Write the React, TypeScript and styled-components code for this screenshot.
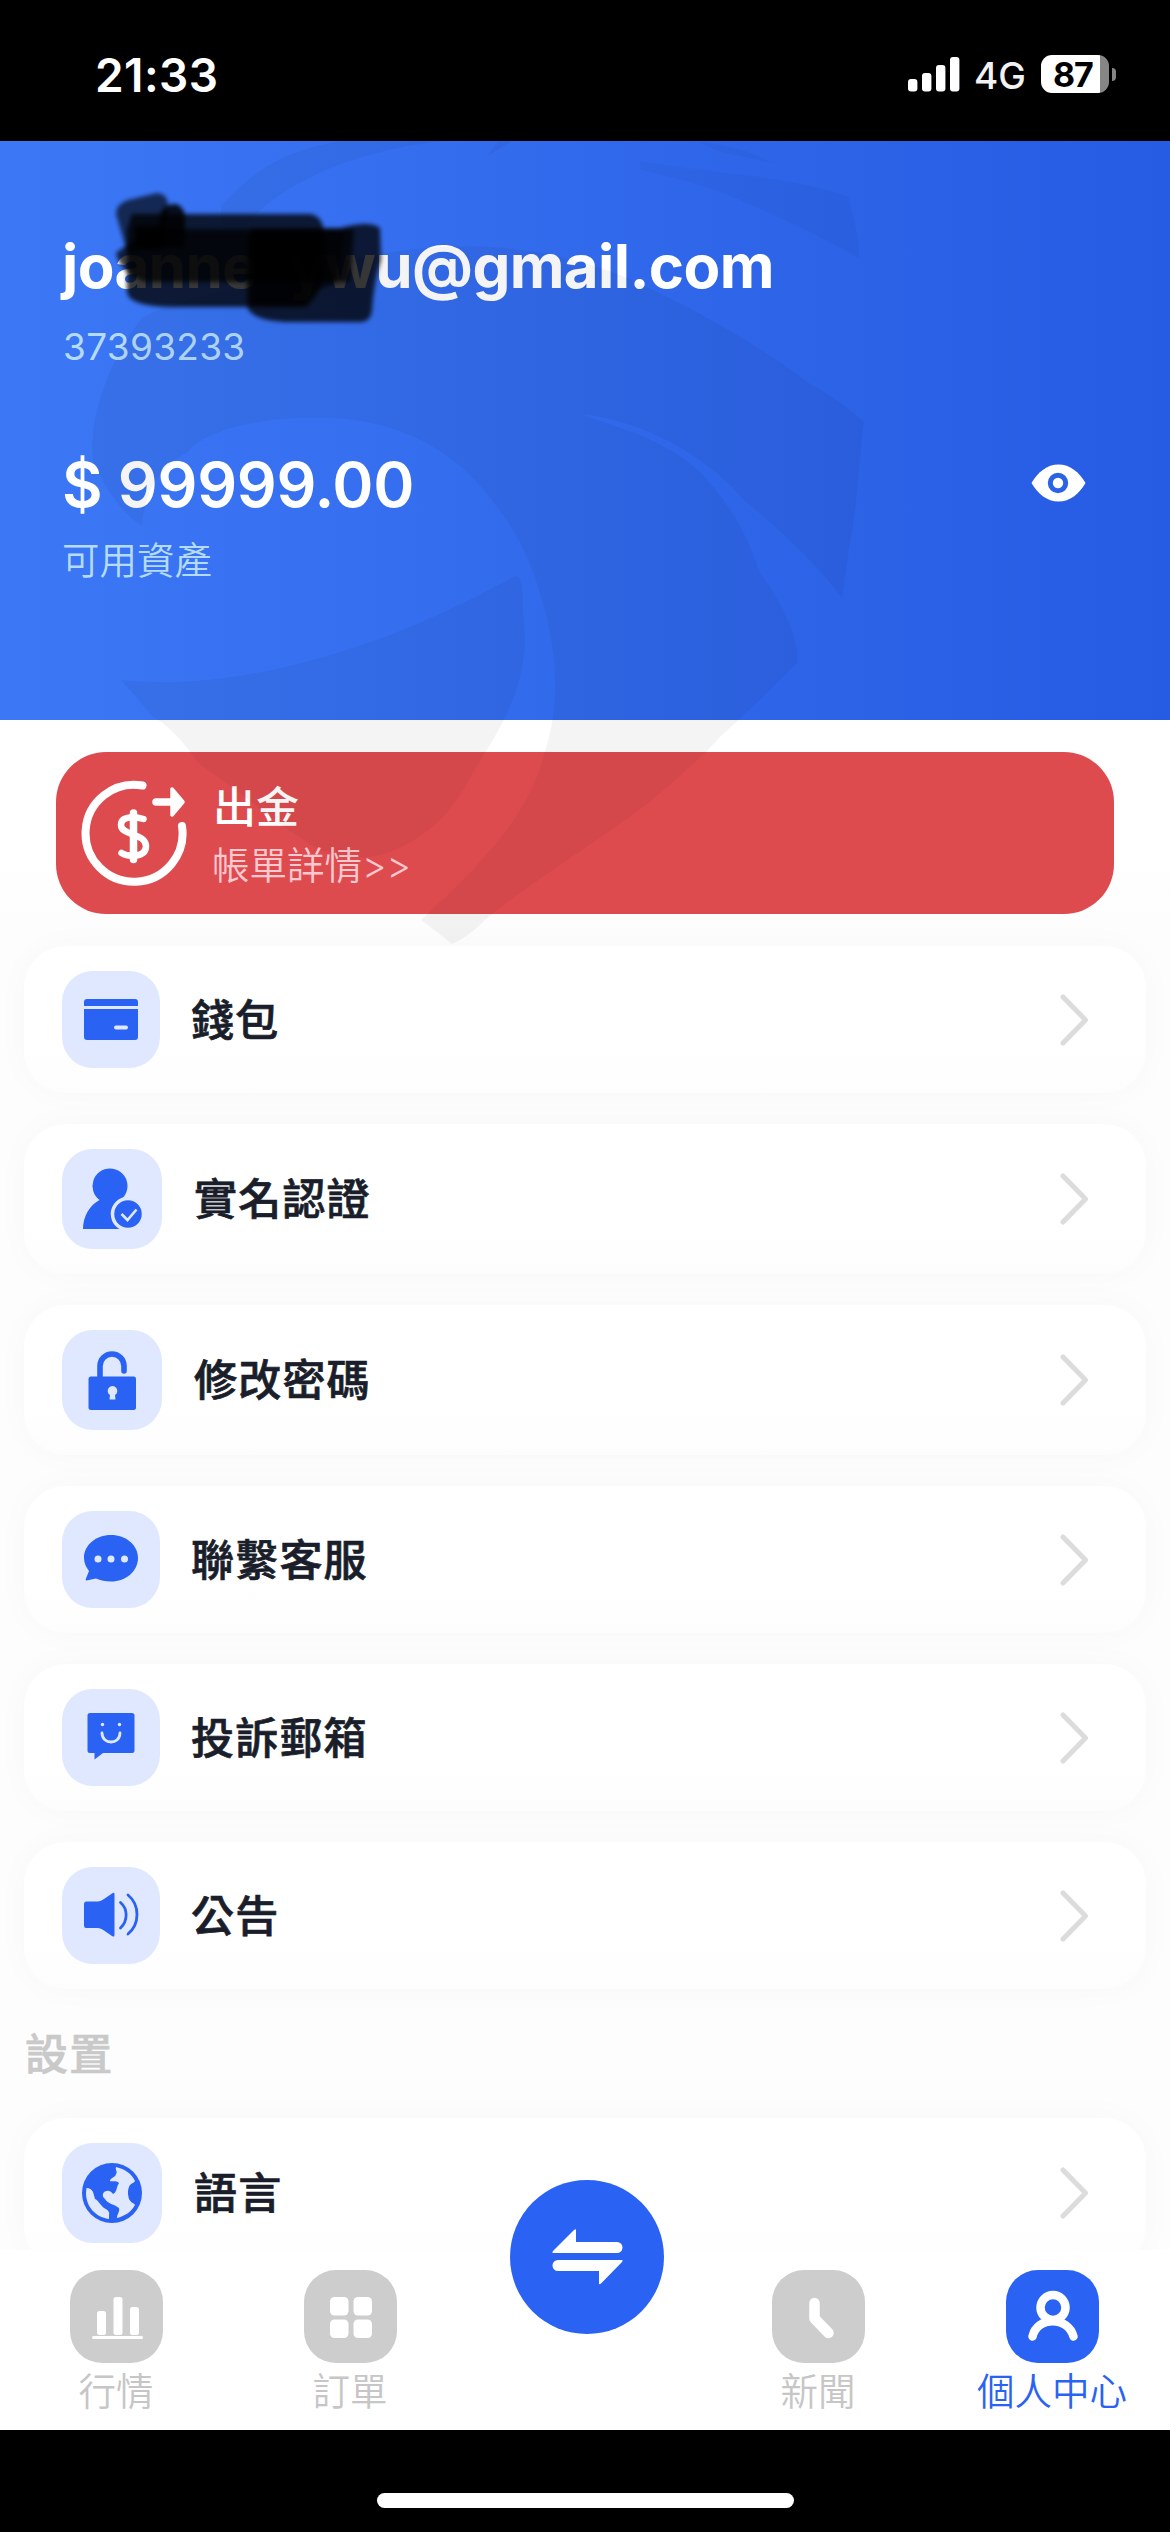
import React from "react";
import styled, { createGlobalStyle } from "styled-components";

const BLUE = "#2a63f3";
const TILE = "#dfe8fe";

const GlobalStyle = createGlobalStyle`
  * { box-sizing: border-box; }
  body { margin: 0; background: #000; }
`;

const Screen = styled.main`
  position: relative;
  width: 1170px;
  height: 2532px;
  display: flex;
  flex-direction: column;
  overflow: hidden;
  background: #fff;
  font-family: Inter, "Noto Sans CJK TC", sans-serif;
`;

const StatusBar = styled.header`
  height: 141px;
  flex: none;
  background: #000;
  color: #fff;
  display: flex;
  justify-content: space-between;
  padding: 52px 54px 0 95px;
`;

const Clock = styled.span`
  font-size: 46px;
  line-height: 46px;
  font-weight: 600;
  letter-spacing: 0.4px;
`;

const StatusIcons = styled.div`
  display: flex;
  align-items: flex-start;
  height: 44px;
`;

const Network = styled.span`
  font-size: 37px;
  line-height: 44px;
  font-weight: 500;
  margin: 2px 15px 0 14px;
  color: #f2f2f2;
`;

const Battery = styled.span`
  width: 68px;
  height: 38px;
  margin-top: 3px;
  border-radius: 11px;
  background: linear-gradient(90deg, #fff 0 59px, #868686 59px);
  color: #000;
  font-size: 34px;
  line-height: 39px;
  font-weight: 700;
  padding-left: 12px;
  letter-spacing: -1.2px;
`;

const Nub = styled.span`
  width: 4px;
  height: 13px;
  margin: 16px 0 0 3px;
  border-radius: 0 6px 6px 0;
  background: #868686;
`;

const Profile = styled.section`
  height: 579px;
  flex: none;
  padding: 89px 84px 0 62px;
  background: linear-gradient(90deg, #3c78f6 0%, #346cee 40%, #2b62e6 75%, #265be4 100%);
  color: #fff;
`;

const Email = styled.h1`
  margin: 0;
  font-size: 60px;
  line-height: 72px;
  font-weight: 700;
  letter-spacing: -0.6px;
  white-space: nowrap;
`;

const Hidden = styled.span`
  display: inline-block;
  width: 32px;
`;

const AccountId = styled.p`
  margin: 23px 0 0 1px;
  font-size: 37px;
  line-height: 44px;
  font-weight: 400;
  letter-spacing: 0.3px;
  color: #b4dcfa;
`;

const BalanceRow = styled.div`
  margin-top: 76px;
  height: 76px;
  display: flex;
  justify-content: space-between;
  align-items: center;
`;

const Balance = styled.strong`
  font-size: 62.5px;
  line-height: 76px;
  font-weight: 600;
  letter-spacing: -0.3px;
  margin-top: 2px;
`;

const BalanceLabel = styled.p`
  margin: 16px 0 0;
  font-size: 37.5px;
  line-height: 48px;
  font-weight: 350;
  color: #b4dcfa;
`;

const Content = styled.section`
  height: 1530px;
  flex: none;
  overflow: hidden;
  display: flex;
  flex-direction: column;
  background: linear-gradient(#fff 0, #fff 120px, #fdfdfd 200px);
`;

const Withdraw = styled.div`
  height: 162px;
  flex: none;
  margin: 32px 56px 32px;
  padding: 27px 25px 25px;
  border-radius: 50px;
  background: #de4b4f;
  display: flex;
  gap: 25px;
`;

const WithdrawText = styled.div`
  display: flex;
  flex-direction: column;
  color: #fff;
`;

const WithdrawTitle = styled.span`
  font-size: 43px;
  line-height: 56px;
  font-weight: 500;
  padding-left: 1px;
`;

const WithdrawLink = styled.span`
  margin-top: 7px;
  font-size: 37.5px;
  line-height: 48px;
  font-weight: 350;
  color: #ffc9d0;
`;

const Menu = styled.div`
  display: flex;
  flex-direction: column;
  gap: 31px;
  padding: 0 24px;
`;

const Row = styled.div<{ $tall?: boolean }>`
  height: ${(p) => (p.$tall ? 150 : 147)}px;
  flex: none;
  display: flex;
  align-items: center;
  padding: 0 57px 0 38px;
  border-radius: 42px;
  background: linear-gradient(#fff 60%, #fdfdfd);
  box-shadow: 0 0 34px rgba(0, 0, 0, 0.026);
`;

const Tile = styled.span<{ $tall?: boolean }>`
  width: ${(p) => (p.$tall ? 100 : 98)}px;
  height: ${(p) => (p.$tall ? 100 : 97)}px;
  border-radius: 31px;
  background: ${TILE};
  display: grid;
  place-items: center;
`;

const RowLabel = styled.span<{ $tall?: boolean }>`
  flex: 1;
  margin-left: ${(p) => (p.$tall ? 32 : 31)}px;
  font-size: 43px;
  line-height: 60px;
  font-weight: 500;
  letter-spacing: 1.2px;
  color: #1a1e2a;
  -webkit-text-stroke: 0.7px #1a1e2a;
`;

const SectionTitle = styled.h2`
  margin: 35px 0 34px 25px;
  font-size: 43px;
  line-height: 60px;
  font-weight: 500;
  letter-spacing: 1.2px;
  color: #c9c9c9;
  -webkit-text-stroke: 0.7px #c9c9c9;
`;

const TabBar = styled.nav`
  height: 180px;
  flex: none;
  background: #fff;
  display: grid;
  grid-template-columns: repeat(5, 234px);
  margin-left: -1px;
`;

const Tab = styled.div<{ $active?: boolean }>`
  display: flex;
  flex-direction: column;
  align-items: center;
  padding-top: 20px;
  font-size: 37.5px;
  line-height: 50px;
  font-weight: 350;
  color: ${(p) => (p.$active ? BLUE : "#c6c6c6")};
  white-space: nowrap;
`;

const TabIcon = styled.span<{ $active?: boolean }>`
  width: 93px;
  height: 93px;
  margin-bottom: 4px;
  border-radius: 32px;
  background: ${(p) => (p.$active ? BLUE : "#cdcdcd")};
  display: block;
`;

const TradeButton = styled.button`
  width: 154px;
  height: 154px;
  margin: -70px 0 0 43px;
  padding: 0;
  border: 0;
  border-radius: 50%;
  background: ${BLUE};
  position: relative;
`;

const HomeArea = styled.footer`
  height: 102px;
  flex: none;
  background: #000;
  display: flex;
  justify-content: center;
  padding-top: 63px;
`;

const HomeIndicator = styled.span`
  width: 417px;
  height: 15px;
  border-radius: 8px;
  background: #fff;
`;

const Overlay = styled.svg`
  position: absolute;
  left: 0;
  top: 141px;
  pointer-events: none;
`;

const Signal = () => (
  <svg width="52" height="44" viewBox="907 52 52 44" fill="#fff">
    <rect x="907" y="79" width="9.4" height="12.5" rx="3" />
    <rect x="921" y="73" width="9.4" height="18.5" rx="3" />
    <rect x="935" y="65" width="9.4" height="26.5" rx="3" />
    <rect x="949" y="57" width="9.4" height="34.5" rx="3" />
  </svg>
);

const Eye = () => (
  <svg width="55" height="38" viewBox="0 0 55 38">
    <path d="M0.500 19C7 8 16 0.500 27.500 0.500S48 8 54.500 19C48 30 39 37.500 27.500 37.500S7 30 0.500 19Z" fill="#fff" />
    <circle cx="27" cy="19" r="7.700" fill="none" stroke="#2b62e6" strokeWidth="5" />
  </svg>
);

const WithdrawIcon = () => (
  <svg width="106" height="110" viewBox="81 779 106 110" fill="none" stroke="#fff" strokeLinecap="round" strokeLinejoin="round">
    <path d="M142.500 785.500A48.500 48.500 0 1 0 182 826" strokeWidth="8" />
    <path d="M156 802H173" strokeWidth="7.500" />
    <path d="M172 789L183 802L172 815Z" fill="#fff" strokeWidth="3.500" />
    <path d="M133.500 813V859.500" strokeWidth="7.500" />
    <path d="M143.500 819C137 817 121 815 121 825C121 836 146 833 146 846C146 858 128 857 121.500 853" strokeWidth="6.500" />
  </svg>
);

const Chevron = () => (
  <svg width="30" height="52" viewBox="0 0 30 52" fill="none" stroke="#dcdcdc" strokeWidth="5" strokeLinecap="round" strokeLinejoin="round">
    <path d="M4 3L26.500 26L4 49" />
  </svg>
);

const WalletIcon = () => (
  <svg width="54" height="41" viewBox="0 0 54 41" fill={BLUE}>
    <path d="M3 0H51Q54 0 54 3V7H0V3Q0 0 3 0ZM0 10H54V38Q54 41 51 41H3Q0 41 0 38Z" />
    <path d="M32 28.500H42" stroke={TILE} strokeWidth="4" strokeLinecap="round" />
  </svg>
);

const VerifyIcon = () => (
  <svg width="100" height="100" viewBox="0 0 100 100" fill={BLUE}>
    <path d="M48 19.500A17.500 17.500 0 0 1 57 52L64 80H21C21 67 28 56 37.500 51A17.500 17.500 0 0 1 48 19.500Z" />
    <circle cx="66" cy="65" r="15.500" stroke={TILE} strokeWidth="3.500" />
    <path d="M59.500 65L65.500 71L74.500 60.500" fill="none" stroke={TILE} strokeWidth="2.600" />
  </svg>
);

const LockIcon = () => (
  <svg width="100" height="100" viewBox="0 0 100 100">
    <path d="M38 48V36A11.800 11.800 0 0 1 62 36V41" fill="none" stroke={BLUE} strokeWidth="5.600" strokeLinecap="round" />
    <rect x="26.500" y="46.500" width="47.500" height="33.500" rx="2.500" fill={BLUE} />
    <path d="M47.500 69.500L48 65A4.800 4.800 0 1 1 53 65L53.500 69.500Z" fill={TILE} />
  </svg>
);

const ChatIcon = () => (
  <svg width="98" height="97" viewBox="0 0 98 97" fill={BLUE}>
    <path d="M49 24C64 24 76 34 76 47S64 70.500 49 70.500C43.500 70.500 38.500 69.500 34 67.500L24.500 69.500Q23 69.500 24 67.500L27 60C24 56 22 52 22 47C22 34 34 24 49 24Z" />
    <g fill={TILE}><circle cx="36" cy="48" r="3.500" /><circle cx="49" cy="48" r="3.500" /><circle cx="62.500" cy="48" r="3.500" /></g>
  </svg>
);

const SmileIcon = () => (
  <svg width="98" height="97" viewBox="0 0 98 97" fill={BLUE}>
    <path d="M28 24H70Q72.500 24 72.500 26.500V61.500Q72.500 64 70 64H41L32.500 70.500V64H28Q25.500 64 25.500 61.500V26.500Q25.500 24 28 24Z" />
    <circle cx="40.500" cy="35.500" r="1.700" fill={TILE} /><circle cx="57.500" cy="35.500" r="1.700" fill={TILE} />
    <path d="M40 44C40 56 58 56 58 44" fill="none" stroke={TILE} strokeWidth="2.800" strokeLinecap="round" />
  </svg>
);

const SpeakerIcon = () => (
  <svg width="98" height="97" viewBox="0 0 98 97" fill={BLUE}>
    <path d="M24 34.500H36Q39 34 42 32L50 26.500Q52.500 25 52.500 27V68Q52.500 70.500 50 69L42 63.500Q39 61 36 61H24Q22 61 22 58.500V37Q22 34.500 24 34.500Z" />
    <path d="M58.500 35.500C66 42 66 54 58.500 61M66 28C78 38 78 57 66 67" fill="none" stroke={BLUE} strokeWidth="2.800" strokeLinecap="round" />
  </svg>
);

const GlobeIcon = () => (
  <svg width="100" height="100" viewBox="0 0 100 100">
    <circle cx="50" cy="50" r="30" fill={BLUE} />
    <path d="M54 24C63 26 70 31 73 38C72 40 70 40 68 42C65 47 66 52 67 56C69 60 72 60 73 62C69 69 63 73 55 75C55 71 58 69 57 65C52 61 46 61 43 56C39 53 41 48 45 48C48 47 50 50 51 51C55 49 54 45 57 40C54 37 49 39 48 38C48 35 54 34 54 31C56 29 53 27 54 24Z" fill={TILE} />
    <path d="M24.500 45C28 45 30 47 31 49L33 56C37 58 38 62 42 65C46 67 48 69 47 72V76C33 74 24 63 24 50Z" fill={TILE} />
  </svg>
);

const MarketIcon = () => (
  <svg width="93" height="93" viewBox="0 0 93 93" fill="#fff">
    <rect x="27" y="41" width="9" height="24" rx="2.500" /><rect x="43.500" y="27" width="9" height="38" rx="2.500" />
    <rect x="60" y="37" width="9" height="28" rx="2.500" /><rect x="22" y="66" width="51" height="3" rx="1.500" />
  </svg>
);

const OrdersIcon = () => (
  <svg width="93" height="93" viewBox="0 0 93 93" fill="#fff">
    <rect x="26" y="27" width="18.500" height="18.500" rx="4.500" /><rect x="49.500" y="27" width="18.500" height="18.500" rx="4.500" />
    <rect x="26" y="49.500" width="18.500" height="18.500" rx="4.500" /><rect x="49.500" y="49.500" width="18.500" height="18.500" rx="4.500" />
  </svg>
);

const NewsIcon = () => (
  <svg width="93" height="93" viewBox="0 0 93 93" fill="none" stroke="#fff" strokeWidth="10.500" strokeLinecap="round" strokeLinejoin="round">
    <path d="M42.500 33V48.500L56.500 63" />
  </svg>
);

const UserIcon = () => (
  <svg width="93" height="93" viewBox="0 0 93 93" fill="none" stroke="#fff" strokeWidth="8.500" strokeLinecap="round">
    <circle cx="47" cy="37.500" r="12.500" /><path d="M26.500 66.500C31 46 62 46 67.500 66.500" />
  </svg>
);

const TradeIcon = () => (
  <svg width="154" height="154" viewBox="0 0 154 154" fill="#fff">
    <path d="M66 50V62H107A5.200 5.200 0 0 1 107 73H43Q41.500 72.500 43 71L64 50Q66 48.500 66 50Z" />
    <path d="M89 103.500V91H48A5.200 5.200 0 0 1 48 80H112Q113.500 80.500 112 82L91 103.500Q89 105 89 103.500Z" />
  </svg>
);

const Watermark = () => (
  <Overlay width="1170" height="820" viewBox="0 141 1170 820" fill="#000" fillOpacity="0.042">
    <path d="M221 205C246 182 268 153 341 141H446C400 145 350 158 315 175C285 190 265 203 245 225L221 225Z" />
    <path d="M488 156L498 141H512Z" />
    <path fillOpacity="0.028" d="M697 141C728 145 752 151 772 163C755 160 735 155 720 152ZM640 161C670 166 710 171 760 177C795 182 825 188 849 197C852 215 860 235 859 258C822 238 780 217 728 195C700 184 668 176 640 170Z" />
    <path d="M142 526C145 490 160 465 187 453C200 435 240 421 298 418C380 413 430 440 465 470C495 500 520 535 534 575C557 640 562 700 545 751C528 820 476 868 421 920C432 928 442 936 452 944C465 938 475 930 485 920C520 890 600 840 651 801C675 780 700 760 721 736C750 710 775 685 797 663C801 640 780 600 759 571C740 510 700 465 670 450C640 432 610 425 581 414C650 422 710 460 746 502C780 530 816 563 842 598C845 580 848 558 849 548C857 510 858 470 864 422C848 407 826 392 810 384C762 347 705 315 655 291C580 252 490 238 400 251C350 258 305 268 270 285C225 290 175 300 142 318C105 365 88 425 93 460C103 485 120 512 142 526Z" />
    <path d="M121 680C210 690 310 665 390 635C440 615 480 595 513 577C524 570 523 600 523 615C533 680 500 730 472 774C450 820 415 845 381 855C350 862 332 853 320 850C295 835 272 820 255 805C230 785 205 768 198 763C180 735 160 720 153 717Z" />
  </Overlay>
);

const Scribble = () => (
  <Overlay width="500" height="240" viewBox="0 141 500 240">
    <defs><filter id="soft" x="-10%" y="-10%" width="120%" height="120%"><feGaussianBlur stdDeviation="2" /></filter></defs>
    <g filter="url(#soft)" fill="#000">
      <path d="M116 214Q116 204 128 200L157 193Q168 194 168 206L162 250L127 252Z" opacity="0.660" />
      <path d="M160 214Q165 203 176 204Q185 207 185 218V248H135V226L160 225Z" opacity="0.880" />
      <path d="M132 214H310Q324 216 324 236V270Q324 292 306 307H165Q128 305 127 292V230Z" opacity="0.780" />
      <path d="M124 247L150 229H354L350 282H145Q120 272 116 253Z" opacity="0.740" />
      <path d="M252 228H340Q370 220 380 228L381 260Q374 280 372 310Q371 322 360 322H284Q250 320 247 306V240Z" opacity="0.780" />
      <path d="M252 232H345L335 284L310 292Q308 306 298 306H252Z" opacity="0.600" />
    </g>
  </Overlay>
);

const items = [
  { label: "錢包", icon: <WalletIcon /> },
  { label: "實名認證", icon: <VerifyIcon />, tall: true },
  { label: "修改密碼", icon: <LockIcon />, tall: true },
  { label: "聯繫客服", icon: <ChatIcon /> },
  { label: "投訴郵箱", icon: <SmileIcon /> },
  { label: "公告", icon: <SpeakerIcon /> },
];

const MenuRow = ({ label, icon, tall }: { label: string; icon: React.ReactNode; tall?: boolean }) => (
  <Row $tall={tall}>
    <Tile $tall={tall}>{icon}</Tile>
    <RowLabel $tall={tall}>{label}</RowLabel>
    <Chevron />
  </Row>
);

export default function App() {
  return (
    <Screen>
      <GlobalStyle />
      <StatusBar>
        <Clock>21:33</Clock>
        <StatusIcons>
          <Signal />
          <Network>4G</Network>
          <Battery>87</Battery>
          <Nub />
        </StatusIcons>
      </StatusBar>
      <Profile>
        <Email>joanne<Hidden />ywu@gmail.com</Email>
        <AccountId>37393233</AccountId>
        <BalanceRow>
          <Balance>$ 99999.00</Balance>
          <Eye />
        </BalanceRow>
        <BalanceLabel>可用資產</BalanceLabel>
      </Profile>
      <Content>
        <Withdraw>
          <WithdrawIcon />
          <WithdrawText>
            <WithdrawTitle>出金</WithdrawTitle>
            <WithdrawLink>帳單詳情&gt;&gt;</WithdrawLink>
          </WithdrawText>
        </Withdraw>
        <Menu>
          {items.map((item) => <MenuRow key={item.label} {...item} />)}
        </Menu>
        <SectionTitle>設置</SectionTitle>
        <Menu>
          <MenuRow label="語言" icon={<GlobeIcon />} tall />
        </Menu>
      </Content>
      <TabBar>
        <Tab><TabIcon><MarketIcon /></TabIcon>行情</Tab>
        <Tab><TabIcon><OrdersIcon /></TabIcon>訂單</Tab>
        <TradeButton><TradeIcon /></TradeButton>
        <Tab><TabIcon><NewsIcon /></TabIcon>新聞</Tab>
        <Tab $active><TabIcon $active><UserIcon /></TabIcon>個人中心</Tab>
      </TabBar>
      <HomeArea><HomeIndicator /></HomeArea>
      <Watermark />
      <Scribble />
    </Screen>
  );
}
